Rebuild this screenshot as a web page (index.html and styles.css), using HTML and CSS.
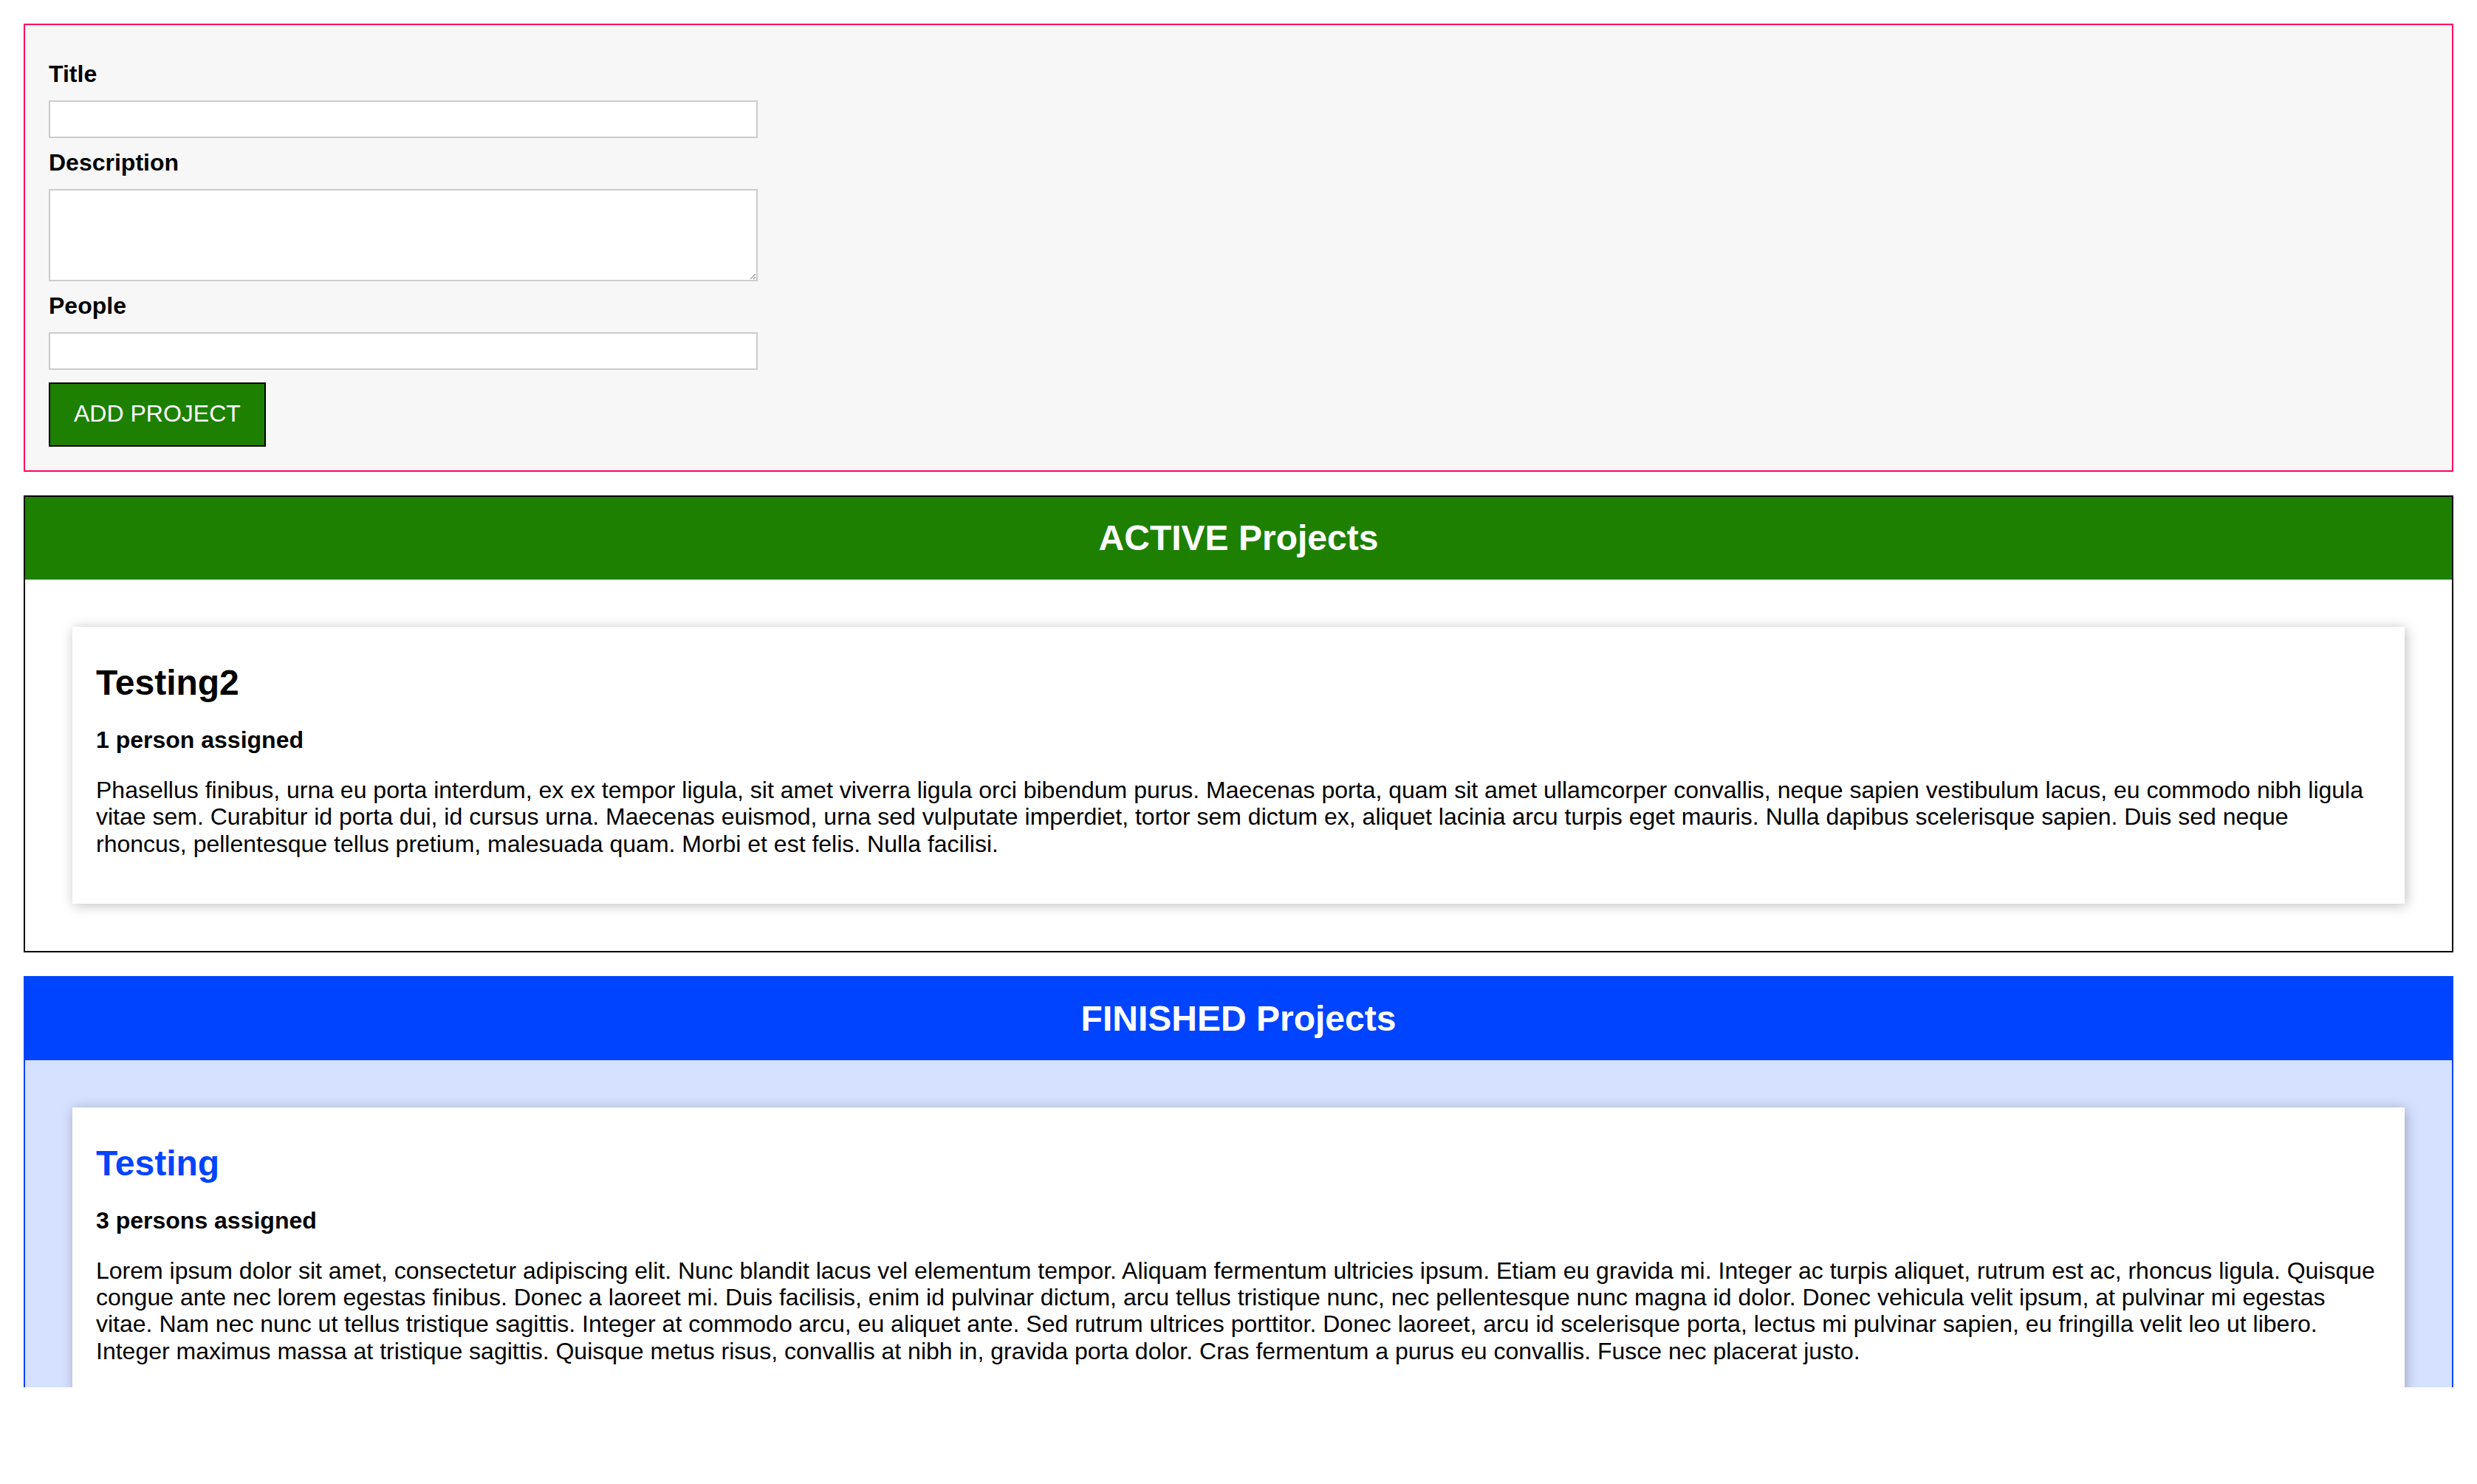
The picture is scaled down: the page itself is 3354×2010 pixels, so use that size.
FILE: index.html
```html
<!DOCTYPE html>
<html lang="en">
<head>
<meta charset="utf-8">
<title>ProjectManager</title>
<link rel="stylesheet" href="styles.css">
</head>
<body>
<div class="page">
  <form class="user-input">
    <label class="field-label" for="title">Title</label>
    <input class="field" type="text" id="title">
    <label class="field-label" for="description">Description</label>
    <textarea class="field field-area" id="description" rows="3"></textarea>
    <label class="field-label" for="people">People</label>
    <input class="field field-last" type="number" id="people">
    <button class="add-btn" type="submit">ADD PROJECT</button>
  </form>

  <section class="projects projects-active">
    <header class="projects-header"><h2 class="projects-title">ACTIVE Projects</h2></header>
    <ul class="project-list">
      <li class="project-card">
        <h2 class="card-title">Testing2</h2>
        <h3 class="card-people">1 person assigned</h3>
        <p class="card-desc">Phasellus finibus, urna eu porta interdum, ex ex tempor ligula, sit amet viverra ligula orci bibendum purus. Maecenas porta, quam sit amet ullamcorper convallis, neque sapien vestibulum lacus, eu commodo nibh ligula vitae sem. Curabitur id porta dui, id cursus urna. Maecenas euismod, urna sed vulputate imperdiet, tortor sem dictum ex, aliquet lacinia arcu turpis eget mauris. Nulla dapibus scelerisque sapien. Duis sed neque rhoncus, pellentesque tellus pretium, malesuada quam. Morbi et est felis. Nulla facilisi.</p>
      </li>
    </ul>
  </section>

  <section class="projects projects-finished">
    <header class="projects-header"><h2 class="projects-title">FINISHED Projects</h2></header>
    <ul class="project-list">
      <li class="project-card">
        <h2 class="card-title">Testing</h2>
        <h3 class="card-people">3 persons assigned</h3>
        <p class="card-desc">Lorem ipsum dolor sit amet, consectetur adipiscing elit. Nunc blandit lacus vel elementum tempor. Aliquam fermentum ultricies ipsum. Etiam eu gravida mi. Integer ac turpis aliquet, rutrum est ac, rhoncus ligula. Quisque congue ante nec lorem egestas finibus. Donec a laoreet mi. Duis facilisis, enim id pulvinar dictum, arcu tellus tristique nunc, nec pellentesque nunc magna id dolor. Donec vehicula velit ipsum, at pulvinar mi egestas vitae. Nam nec nunc ut tellus tristique sagittis. Integer at commodo arcu, eu aliquet ante. Sed rutrum ultrices porttitor. Donec laoreet, arcu id scelerisque porta, lectus mi pulvinar sapien, eu fringilla velit leo ut libero. Integer maximus massa at tristique sagittis. Quisque metus risus, convallis at nibh in, gravida porta dolor. Cras fermentum a purus eu convallis. Fusce nec placerat justo.</p>
      </li>
    </ul>
  </section>
</div>
</body>
</html>
```

FILE: styles.css
```css
* {
  box-sizing: border-box;
}

html {
  font-family: "Liberation Sans", Arial, Helvetica, sans-serif;
  font-size: 32px;
  color: #000;
}

body {
  margin: 0;
  background: #ffffff;
}

.page {
  height: 1879px;
  overflow: hidden;
  display: flow-root;
}

/* ---------- form ---------- */
.user-input {
  margin: 32px;
  padding: 48px 32px 32.3px;
  border: 2px solid #ff0062;
  background: #f7f7f7;
}

.field-label {
  display: block;
  font-weight: bold;
  font-size: 32px;
  line-height: 36px;
  margin: 0 0 17.7px;
}

.field {
  display: block;
  font: inherit;
  width: 100%;
  max-width: 960px;
  height: 51px;
  margin: 0 0 15.3px;
  padding: 6.4px 12.8px;
  border: 2px solid #cccccc;
  border-radius: 0;
  background: #ffffff;
  line-height: 34px;
}

.field-area {
  height: 125px;
  resize: vertical;
}

.field-last {
  margin-bottom: 17px;
}

.add-btn {
  display: block;
  font: inherit;
  font-size: 32px;
  line-height: 35px;
  color: #ffffff;
  background: #1d8000;
  border: 2px solid #000000;
  border-radius: 0;
  padding: 23px 32px 25px;
  cursor: pointer;
}

/* ---------- project lists ---------- */
.projects {
  margin: 32px;
  border: 2px solid #000000;
}

.projects-header {
  height: 112px;
  display: flex;
  justify-content: center;
  align-items: center;
  background: #1d8000;
}

.projects-title {
  margin: 0;
  color: #ffffff;
  font-size: 48px;
  line-height: 56px;
  font-weight: bold;
}

.project-list {
  list-style: none;
  margin: 0;
  padding: 32px;
  background: #ffffff;
}

.project-card {
  margin: 32px;
  padding: 32px;
  background: #ffffff;
  box-shadow: 2px 2px 16px rgba(0, 0, 0, 0.26);
}

.card-title {
  margin: 15px 0 0;
  font-size: 48px;
  line-height: 58px;
  font-weight: bold;
  color: #000000;
}

.card-people {
  margin: 30px 0 32px;
  font-size: 32px;
  line-height: 36px;
  font-weight: bold;
  color: #000000;
}

.card-desc {
  margin: 0 0 31px;
  font-size: 32px;
  line-height: 36.3px;
}

/* finished variant */
.projects-finished {
  border-color: #0044ff;
}

.projects-finished .projects-header {
  background: #0044ff;
}

.projects-finished .project-list {
  background: #d6e1ff;
}

.projects-finished .card-title {
  color: #0044ff;
}
```
